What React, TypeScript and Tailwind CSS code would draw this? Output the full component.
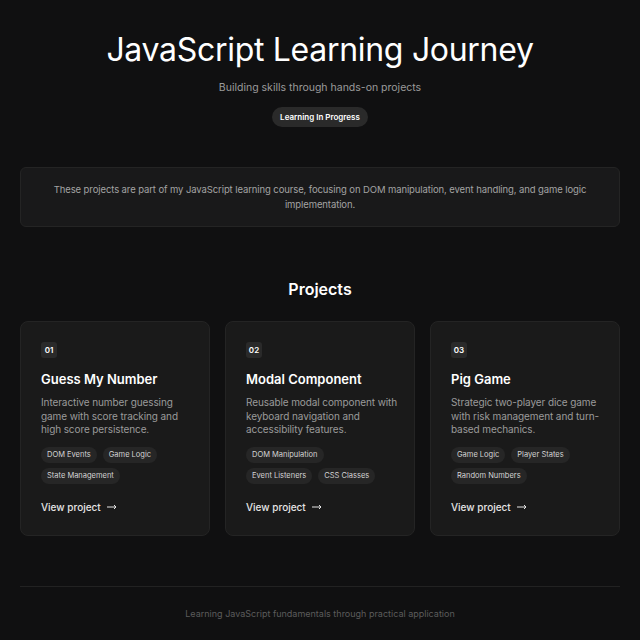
import React from 'react'

interface Project {
  num: string
  title: string
  desc: string[]
  tags: string[][]
}

const projects: Project[] = [
  {
    num: '01',
    title: 'Guess My Number',
    desc: ['Interactive number guessing', 'game with score tracking and', 'high score persistence.'],
    tags: [['DOM Events', 'Game Logic'], ['State Management']]
  },
  {
    num: '02',
    title: 'Modal Component',
    desc: ['Reusable modal component with', 'keyboard navigation and', 'accessibility features.'],
    tags: [['DOM Manipulation'], ['Event Listeners', 'CSS Classes']]
  },
  {
    num: '03',
    title: 'Pig Game',
    desc: ['Strategic two-player dice game', 'with risk management and turn-', 'based mechanics.'],
    tags: [['Game Logic', 'Player States'], ['Random Numbers']]
  }
]

const ProjectCard: React.FC<{ project: Project }> = ({ project }) => (
  <div className="flex flex-col rounded-lg border border-[#242424] bg-[#1a1a1a] px-5 pt-5 pb-[21px]">
    <div className="flex h-4 w-4 items-center justify-center self-start rounded-[3px] bg-[#2a2a2a] text-[8px] font-semibold text-white">
      {project.num}
    </div>
    <h3 className="mt-[12px] text-[13px] leading-[18px] font-semibold text-white">{project.title}</h3>
    <p className="mt-2 text-[10px] leading-[13.5px] tracking-[-0.1px] whitespace-nowrap text-[#9b9b9b]">
      {project.desc.map((line, i) => (
        <React.Fragment key={i}>
          {line}
          {i < project.desc.length - 1 && <br />}
        </React.Fragment>
      ))}
    </p>
    <div className="mt-[10px] flex flex-col gap-[5px]">
      {project.tags.map((row, i) => (
        <div key={i} className="flex gap-[6px]">
          {row.map((tag) => (
            <span
              key={tag}
              className="flex h-4 items-center rounded-full bg-[#262626] px-[6px] text-[7.5px] text-[#d4d4d4]"
            >
              {tag}
            </span>
          ))}
        </div>
      ))}
    </div>
    <div className="mt-auto flex items-center gap-[6px] pt-4 text-[10px] leading-[14px] font-medium text-[#e5e5e5]">
      View project
      <svg width="10" height="6" viewBox="0 0 10 6" fill="none" stroke="currentColor" strokeWidth="1">
        <path d="M0 3h9M7 1l2 2-2 2" />
      </svg>
    </div>
  </div>
)

export default function App() {
  return (
    <div
      className="min-h-screen bg-[#101011] px-5 pt-[29px] pb-5"
      style={{ fontFamily: 'Inter, "Noto Sans", sans-serif' }}
    >
      <header className="flex flex-col items-center">
        <h1 className="text-[32px] leading-[42px] font-normal tracking-[-0.3px] text-white">
          JavaScript Learning Journey
        </h1>
        <p className="mt-[9px] text-[10.5px] leading-4 text-[#9b9b9b]">Building skills through hands-on projects</p>
        <span className="mt-[11px] flex h-5 items-center rounded-full bg-[#2a2a2a] px-2 text-[8px] font-semibold text-white">
          Learning In Progress
        </span>
      </header>

      <div className="mt-10 rounded-md border border-[#242424] bg-[#19191a] px-2 py-[14px] text-center text-[9.5px] leading-[15px] tracking-[-0.1px] whitespace-nowrap text-[#a3a3a3]">
        These projects are part of my JavaScript learning course, focusing on DOM manipulation, event handling, and game
        logic
        <br />
        implementation.
      </div>

      <h2 className="mt-[50px] text-center text-[16px] leading-6 font-semibold text-white">Projects</h2>

      <div className="mt-5 grid grid-cols-3 gap-[15px]">
        {projects.map((p) => (
          <ProjectCard key={p.num} project={p} />
        ))}
      </div>

      <footer className="mt-[50px] border-t border-[#222] pt-[21px] text-center text-[9px] leading-[12px] text-[#5c5c5c]">
        Learning JavaScript fundamentals through practical application
      </footer>
    </div>
  )
}
